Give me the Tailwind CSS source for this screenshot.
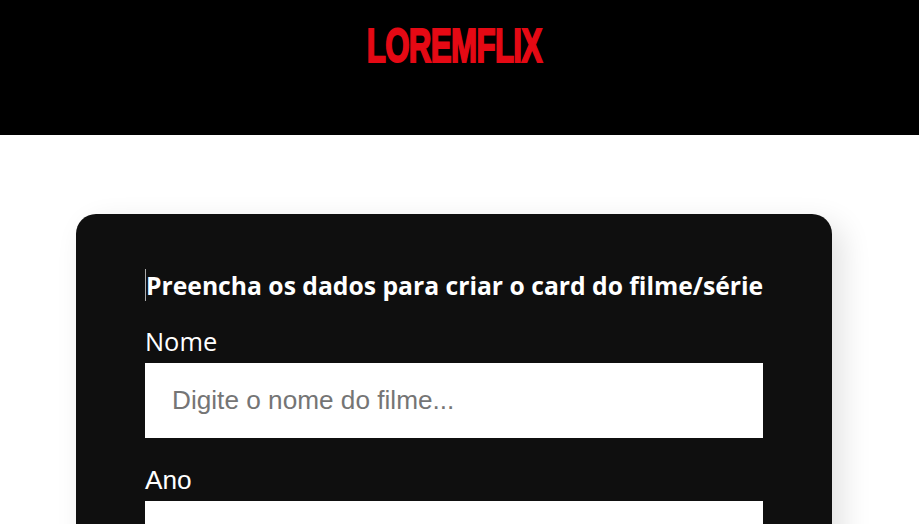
<!DOCTYPE html>
<html lang="pt-BR">
  <head>
    <meta charset="UTF-8" />
    <meta name="viewport" content="width=device-width, initial-scale=1.0" />
    <script src="https://cdn.jsdelivr.net/npm/@tailwindcss/browser@4"></script>
    <title>Loremflix</title>
  </head>

  <body class="bg-white overflow-hidden h-[524px] w-[919px]">
    <header class="bg-black w-[919px] h-[135px] flex justify-center pt-[18px] pr-[11px]">
      <h1
        class="font-['Liberation_Sans'] font-bold text-[#e50914] text-[48px] leading-[56px] tracking-[-1px] scale-x-[0.652] [-webkit-text-stroke:2px_#e50914] h-[56px]"
      >
        LOREMFLIX
      </h1>
    </header>

    <main class="pt-[79px] pl-[76px] w-[919px]">
      <form
        class="w-[756px] h-[600px] bg-[#0f0f0f] rounded-[20px] px-[69px] pt-[55px] shadow-[10px_10px_30px_rgba(0,0,0,0.12)] text-white"
      >
        <h2
          class="font-['Open_Sans'] font-bold text-[24.7px] leading-[34px] h-[32px] border-l border-[#aaaaaa] mb-[24px] whitespace-nowrap"
        >
          Preencha os dados para criar o card do filme/série
        </h2>

        <label for="nome" class="block font-['Open_Sans'] text-[25.4px] leading-[32px] mb-[6px]">Nome</label>
        <input
          id="nome"
          type="text"
          placeholder="Digite o nome do filme..."
          class="block w-full h-[75px] bg-white px-[27px] font-['Liberation_Sans'] text-[26.2px] text-[#757575] placeholder:text-[#757575] outline-none"
        />

        <label for="ano" class="block font-['Liberation_Sans'] text-[26.2px] leading-[32px] mt-[26px] mb-[5px]">Ano</label>
        <input
          id="ano"
          type="text"
          class="block w-full h-[75px] bg-white px-[27px] font-['Liberation_Sans'] text-[26.2px] outline-none"
        />
      </form>
    </main>
  </body>
</html>
